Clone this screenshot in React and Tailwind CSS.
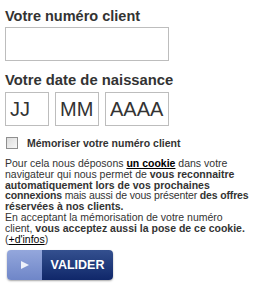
import React from "react";

export default function App() {
  return (
    <div className="w-[255px] h-[284px] bg-white overflow-hidden pl-[5px] pt-[8px] text-[#333]" style={{ fontFamily: '"Liberation Sans", Arial, sans-serif' }}>
      {/* Numéro client */}
      <label className="block text-[14.5px] font-bold leading-[17px]">Votre numéro client</label>
      <input
        type="text"
        className="mt-[2px] block w-[164px] h-[34px] border border-[#bdbdbd] bg-white outline-none"
      />

      {/* Date de naissance */}
      <label className="block mt-[11px] text-[14.8px] font-bold leading-[17px]">Votre date de naissance</label>
      <div className="mt-[3px] flex gap-[6px]">
        <input
          type="text"
          placeholder="JJ"
          className="w-[44px] h-[34px] border border-[#bdbdbd] px-[4px] text-[20px] text-[#333] placeholder:text-[#333] outline-none"
        />
        <input
          type="text"
          placeholder="MM"
          className="w-[44px] h-[34px] border border-[#bdbdbd] px-[4px] text-[20px] text-[#333] placeholder:text-[#333] outline-none"
        />
        <input
          type="text"
          placeholder="AAAA"
          className="w-[64px] h-[34px] border border-[#bdbdbd] px-[4px] text-[20px] text-[#333] placeholder:text-[#333] outline-none"
        />
      </div>

      {/* Mémoriser */}
      <label className="mt-[11px] flex items-center gap-[9px] text-[10.5px] font-bold leading-[12px]">
        <span className="ml-[1px] w-[12px] h-[12px] border border-[#8f8f8f] bg-gradient-to-br from-[#dcdcdc] to-[#f8f8f8]" />
        Mémoriser votre numéro client
      </label>

      {/* Texte cookie */}
      <p className="mt-[9px] text-[10.5px] leading-[10.8px] text-[#333] whitespace-nowrap">
        Pour cela nous déposons <a className="font-bold underline text-black">un cookie</a> dans votre
        <br />
        navigateur qui nous permet de <b>vous reconnaitre</b>
        <br />
        <b>automatiquement lors de vos prochaines</b>
        <br />
        <span className="tracking-[-0.15px]">
          <b>connexions</b> mais aussi de vous présenter <b>des offres</b>
        </span>
        <br />
        <b>réservées à nos clients.</b>
        <br />
        En acceptant la mémorisation de votre numéro
        <br />
        client, <b>vous acceptez aussi la pose de ce cookie.</b>
        <br />
        (<a className="underline text-black">+d'infos</a>)
      </p>

      {/* Bouton */}
      <button className="mt-[6px] ml-[2px] flex w-[106px] h-[30px] rounded-[4px] overflow-hidden shadow-[0_1px_2px_rgba(0,0,0,0.35)]">
        <span className="w-[35px] h-full flex items-center justify-center bg-gradient-to-b from-[#94a7dc] to-[#6f86c8]">
          <svg width="8" height="8" viewBox="0 0 8 8">
            <path d="M0 0 L8 4 L0 8 Z" fill="#eef2fb" />
          </svg>
        </span>
        <span className="flex-1 h-full flex items-center justify-center bg-gradient-to-b from-[#34508f] to-[#10276a] text-white text-[12.5px] font-bold">
          VALIDER
        </span>
      </button>
    </div>
  );
}
